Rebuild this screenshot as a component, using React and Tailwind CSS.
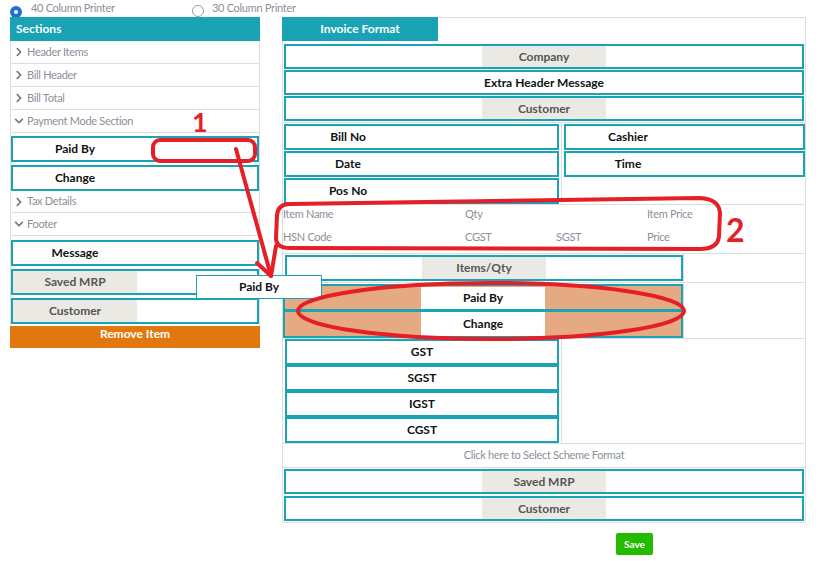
import { FaChevronRight, FaChevronDown } from 'react-icons/fa'

const font = { fontFamily: 'Lato, "Open Sans", sans-serif' }

function Slot({ label, gray = false, center = false, h = 'h-[26px]', className = '' }) {
  return (
    <div className={`flex border-2 border-[#1aa3b5] bg-white ${h} ${center ? 'justify-center' : ''} ${className}`}>
      <div
        className={`flex w-[124px] items-center justify-center text-[12px] font-bold ${
          gray ? 'bg-[#ebe9e3] text-[#555]' : 'text-[#111]'
        }`}
      >
        {label}
      </div>
    </div>
  )
}

function Row({ label, open = false, h = 'h-[23px]' }) {
  return (
    <div className={`flex items-center gap-[3px] border-b border-[#ddd] pl-[3px] text-[11px] tracking-[-0.3px] text-[#8a909a] ${h}`}>
      {open ? <FaChevronDown size={10} className="text-[#777]" /> : <FaChevronRight size={10} className="text-[#777]" />}
      {label}
    </div>
  )
}

function Radio({ checked }) {
  return checked ? (
    <span className="flex h-[12px] w-[12px] items-center justify-center rounded-full bg-[#1e6fd0]">
      <span className="block h-[4px] w-[4px] rounded-full bg-white" />
    </span>
  ) : (
    <span className="block h-[12px] w-[12px] rounded-full border border-[#999] bg-white" />
  )
}

export default function App() {
  return (
    <div className="relative h-[561px] w-[825px] overflow-hidden bg-white" style={font}>
      {/* printer choice */}
      <div className="relative z-0 flex h-[17px] items-start text-[11px] tracking-[-0.3px] text-[#8a909a]">
        <div className="ml-[10px] mt-[6px]"><Radio checked /></div>
        <span className="ml-[9px] w-[161px]">40 Column Printer</span>
        <div className="mt-[5px]"><Radio /></div>
        <span className="ml-[8px]">30 Column Printer</span>
      </div>

      <div className="relative z-10 flex items-start">
        {/* left: sections */}
        <div className="ml-[10px] flex w-[250px] flex-col">
          <div className="flex h-[24px] items-center bg-[#1aa3b5] pl-[6px] text-[12px] font-bold text-white">
            Sections
          </div>
          <div className="flex flex-col border-x border-[#ddd]">
            <Row label="Header Items" />
            <Row label="Bill Header" />
            <Row label="Bill Total" />
            <Row label="Payment Mode Section" open />
            <div className="flex flex-col gap-[3px] pt-[3px]">
              <Slot label="Paid By" />
              <Slot label="Change" />
            </div>
            <Row label="Tax Details" h="h-[22px]" />
            <Row label="Footer" open />
            <div className="flex flex-col gap-[3px] pb-[2px] pt-[4px]">
              <Slot label="Message" />
              <Slot label="Saved MRP" gray />
              <Slot label="Customer" gray />
            </div>
          </div>
          <div className="flex h-[22px] justify-center bg-[#e2780d] pt-[1px] text-[12px] font-bold leading-[14px] text-white">
            Remove Item
          </div>
        </div>

        {/* right: invoice format */}
        <div className="ml-[22px] flex w-[524px] flex-col">
          <div className="flex flex-col border border-[#ddd]">
            <div className="-ml-px -mt-px flex h-[24px] w-[156px] items-center justify-center bg-[#1aa3b5] text-[12px] font-bold text-white">
              Invoice Format
            </div>
            <div className="flex flex-col gap-[1px] px-[1px] pb-[1px] pt-[3px]">
              <Slot label="Company" gray center h="h-[25px]" />
              <Slot label="Extra Header Message" center h="h-[25px]" />
              <Slot label="Customer" gray center h="h-[25px]" />
            </div>

            <div className="flex h-[82px] border-t border-[#ddd]">
              <div className="flex w-[279px] flex-col gap-[1px] border-r border-[#ddd] pl-[1px] pt-[1px]">
                <Slot label="Bill No" className="w-[275px]" />
                <Slot label="Date" className="w-[275px]" />
                <Slot label="Pos No" className="w-[275px]" />
              </div>
              <div className="flex flex-1 flex-col gap-[1px] pl-[2px] pt-[1px]">
                <Slot label="Cashier" />
                <Slot label="Time" />
              </div>
            </div>

            <div className="grid h-[50px] grid-cols-[91px_91px_91px_91px_1fr] grid-rows-[16px_16px] gap-y-[7px] border-y border-[#ddd] pt-[1px] text-[11px] leading-[16px] tracking-[-0.3px] text-[#8a909a]">
              <span>Item Name</span>
              <span />
              <span>Qty</span>
              <span />
              <span>Item Price</span>
              <span>HSN Code</span>
              <span />
              <span>CGST</span>
              <span>SGST</span>
              <span>Price</span>
            </div>

            <div className="flex h-[29px] border-b border-[#ddd]">
              <div className="w-[401px] border-r border-[#ddd] pl-[2px] pt-[1px]">
                <Slot label="Items/Qty" gray center className="w-[398px]" />
              </div>
            </div>

            <div className="flex border-b border-[#ddd]">
              <div className="w-[401px] border-r border-[#ddd] pt-[1px]">
                <div className="flex flex-col border-2 border-[#1aa3b5] bg-[#e6aa82]">
                  <div className="flex h-[26px] justify-center border-b-[3px] border-[#1aa3b5]">
                    <div className="mt-[1px] flex w-[124px] items-center justify-center bg-white text-[12px] font-bold text-[#111]">
                      Paid By
                    </div>
                  </div>
                  <div className="flex h-[24px] justify-center">
                    <div className="flex w-[124px] items-center justify-center bg-white text-[12px] font-bold text-[#111]">
                      Change
                    </div>
                  </div>
                </div>
              </div>
            </div>

            <div className="flex">
              <div className="flex w-[279px] flex-col border-r border-[#ddd] pl-[2px]">
                <Slot label="GST" center className="w-[274px]" />
                <Slot label="SGST" center className="w-[274px]" />
                <Slot label="IGST" center className="w-[274px]" />
                <Slot label="CGST" center className="w-[274px]" />
              </div>
            </div>

            <div className="flex h-[25px] items-center justify-center border-y border-[#ddd] text-[11px] tracking-[-0.3px] text-[#8a909a]">
              Click here to Select Scheme Format
            </div>

            <div className="flex flex-col gap-[2px] p-[1px]">
              <Slot label="Saved MRP" gray center h="h-[25px]" />
              <Slot label="Customer" gray center h="h-[25px]" />
            </div>
          </div>

          <button className="ml-[334px] mt-[10px] flex h-[22px] w-[37px] items-center justify-center rounded-[2px] bg-[#22bb00] text-[10px] font-bold text-white">
            Save
          </button>
        </div>
      </div>

      {/* dragged item */}
      <div className="absolute left-[196px] top-[275px] z-20 flex h-[24px] w-[126px] items-center justify-center border border-[#1aa3b5] bg-white text-[12px] font-bold text-[#111]">
        Paid By
      </div>

      {/* red annotations */}
      <span className="absolute left-[192px] top-[108px] z-30 text-[27px] font-bold leading-none text-[#e61e28]">1</span>
      <span className="absolute left-[726px] top-[214px] z-30 text-[32px] font-bold leading-none text-[#e61e28]">2</span>
      <svg className="pointer-events-none absolute inset-0 z-30" width="825" height="561" viewBox="0 0 825 561" fill="none">
        <g stroke="#e61e28" strokeWidth="4" strokeLinecap="round" strokeLinejoin="round">
          <rect x="153" y="140" width="102" height="21" rx="7" />
          <path d="M236 149 L271 276" />
          <path d="M257 263 L271 276 L276 246" />
          <path d="M290 204 Q278 204 277 215 L276 238 Q276 248 290 248 L700 249 Q718 249 719 236 L720 213 Q719 199 700 198 L290 204" />
          <ellipse cx="491" cy="311" rx="193" ry="28" />
        </g>
      </svg>
    </div>
  )
}
